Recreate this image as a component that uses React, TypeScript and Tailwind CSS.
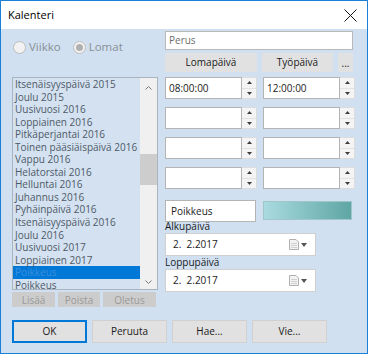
import React from 'react';

const items = [
  'Itsenäisyyspäivä 2015',
  'Joulu 2015',
  'Uusivuosi 2016',
  'Loppiainen 2016',
  'Pitkäperjantai 2016',
  'Toinen pääsiäispäivä 2016',
  'Vappu 2016',
  'Helatorstai 2016',
  'Helluntai 2016',
  'Juhannus 2016',
  'Pyhäinpäivä 2016',
  'Itsenäisyyspäivä 2016',
  'Joulu 2016',
  'Uusivuosi 2017',
  'Loppiainen 2017',
  'Poikkeus',
  'Poikkeus',
];

function Spinner() {
  return (
    <div className="w-[15px] h-[22px] flex flex-col bg-[#f4f4f4] border-y border-r border-[#dcdcdc]">
      <div className="flex-1 flex items-center justify-center border-b border-[#e2e2e2]">
        <svg width="5" height="3" viewBox="0 0 5 3">
          <path d="M0 3 L2.5 0 L5 3 Z" fill="#3c3c3c" />
        </svg>
      </div>
      <div className="flex-1 flex items-center justify-center">
        <svg width="5" height="3" viewBox="0 0 5 3">
          <path d="M0 0 L2.5 3 L5 0 Z" fill="#3c3c3c" />
        </svg>
      </div>
    </div>
  );
}

function TimeBox({ value }: { value?: string }) {
  return (
    <div className="flex">
      <div className="w-[77px] h-[22px] bg-white border border-[#b4b4b4] flex items-center pl-[3px] text-[#1a1a1a]">
        {value}
      </div>
      <Spinner />
    </div>
  );
}

function TimeRow({ a, b, className }: { a?: string; b?: string; className: string }) {
  return (
    <div className={`flex gap-[6px] ${className}`}>
      <TimeBox value={a} />
      <TimeBox value={b} />
    </div>
  );
}

function DateBox() {
  return (
    <div className="w-[151px] h-[23px] bg-white border border-[#cfcfcf] flex items-center pl-[7px] text-[#1a1a1a]">
      <span className="flex-1 whitespace-pre">2.  2.2017</span>
      <svg width="10" height="11" viewBox="0 0 10 11" className="mr-[2px]">
        <path d="M0.5 0.5 H7 L9.5 3 V10.5 H0.5 Z" fill="#f2f2f2" stroke="#b0b0b0" />
        <path d="M2 4.5 H8 M2 6.5 H8 M2 8.5 H8" stroke="#d0d0d0" />
      </svg>
      <svg width="6" height="4" viewBox="0 0 6 4" className="mr-[8px]">
        <path d="M0 0 L3 4 L6 0 Z" fill="#555" />
      </svg>
    </div>
  );
}

function Radio({ label, checked }: { label: string; checked?: boolean }) {
  return (
    <div className="flex items-center gap-[3px] text-[11.5px] text-[#8a8f95]">
      <div className="w-[13px] h-[13px] rounded-full border border-[#bcbcbc] bg-[#f2f2f2] flex items-center justify-center">
        {checked && <div className="w-[7px] h-[7px] rounded-full bg-[#b0b0b0]" />}
      </div>
      <span>{label}</span>
    </div>
  );
}

export default function App() {
  return (
    <div
      className="w-[368px] h-[354px] border border-[#1a7fd6] bg-[#d0e0f1] flex flex-col overflow-hidden text-[10px]"
      style={{ fontFamily: '"Open Sans", "Noto Sans", sans-serif' }}
    >
      {/* Title bar */}
      <div className="h-[28px] bg-white flex items-center justify-between pl-[7px] pr-[10px] shrink-0">
        <span className="text-[11px] text-black">Kalenteri</span>
        <svg width="13" height="13" viewBox="0 0 13 13">
          <path d="M0.5 0.5 L12.5 12.5 M12.5 0.5 L0.5 12.5" stroke="#111" strokeWidth="1" />
        </svg>
      </div>

      <div className="flex">
        {/* Left column */}
        <div className="ml-[11px] w-[146px] flex flex-col">
          <div className="mt-[11px] h-[14px] flex items-center gap-[12px] pl-[1px]">
            <Radio label="Viikko" />
            <Radio label="Lomat" checked />
          </div>
          <div className="mt-[23px] h-[213px] border border-[#a9b4bf] bg-[#d3e1f1] flex overflow-hidden">
            <div className="flex-1 min-w-0 leading-[12.55px] text-[#4f5a66]">
              {items.map((t, i) => (
                <div
                  key={i}
                  className={`pl-[2px] whitespace-nowrap ${i === 15 ? 'bg-[#0078d7] text-[#3d8fdc]' : ''}`}
                >
                  {t}
                </div>
              ))}
            </div>
            <div className="w-[17px] shrink-0 bg-[#f0f0f0] flex flex-col items-center">
              <svg width="7" height="4" viewBox="0 0 7 4" className="mt-[8px]">
                <path d="M0.5 3.5 L3.5 0.5 L6.5 3.5" stroke="#7a7a7a" fill="none" />
              </svg>
              <div className="mt-[64px] w-[17px] h-[31px] bg-[#cdcdcd]" />
              <div className="flex-1" />
              <svg width="7" height="4" viewBox="0 0 7 4" className="mb-[5px]">
                <path d="M0.5 0.5 L3.5 3.5 L6.5 0.5" stroke="#7a7a7a" fill="none" />
              </svg>
            </div>
          </div>
          <div className="mt-[2px] flex gap-[3px] text-[#9a9a9a] leading-none">
            <div className="w-[43px] h-[15px] bg-[#cccccc] flex items-center justify-center">Lisää</div>
            <div className="w-[42px] h-[15px] bg-[#cccccc] flex items-center justify-center">Poista</div>
            <div className="w-[53px] h-[15px] bg-[#cccccc] flex items-center justify-center">Oletus</div>
          </div>
        </div>

        {/* Right column */}
        <div className="ml-[7px] w-[190px] flex flex-col">
          <div className="mt-[2px] w-[188px] h-[19px] bg-white border border-[#b9b9b9] flex items-center pl-[3px] text-[#6d6d6d]">
            Perus
          </div>
          <div className="mt-[3px] flex gap-[5px] text-[#1a1a1a]">
            <div className="w-[92px] h-[19px] bg-[#e1e1e1] flex items-center justify-center">Lomapäivä</div>
            <div className="w-[71px] h-[19px] bg-[#e1e1e1] flex items-center justify-center">Työpäivä</div>
            <div className="w-[15px] h-[19px] bg-[#e1e1e1] flex items-center justify-center leading-none">...</div>
          </div>
          <TimeRow a="08:00:00" b="12:00:00" className="mt-[5px]" />
          <TimeRow className="mt-[8px]" />
          <TimeRow className="mt-[8px]" />
          <TimeRow className="mt-[8px]" />
          <div className="mt-[11px] flex gap-[7px] items-start">
            <div className="w-[91px] h-[22px] bg-white border border-[#b4b4b4] flex items-center pl-[5px] text-[#1a1a1a]">
              Poikkeus
            </div>
            <div className="mt-[1px] w-[89px] h-[19px] border border-[#9fc6c8] bg-gradient-to-r from-[#a9dbe0] to-[#5ea6a4]" />
          </div>
          <div className="h-[11px] leading-[11px] text-[#1a1a1a] mt-[-1px]">Alkupäivä</div>
          <div className="mt-[1px]"><DateBox /></div>
          <div className="h-[13px] leading-[13px] text-[#1a1a1a]">Loppupäivä</div>
          <DateBox />
        </div>
      </div>

      {/* Bottom buttons */}
      <div className="mt-[13px] ml-[11px] flex gap-[5px] text-[#1a1a1a]">
        <div className="w-[75px] h-[23px] bg-[#e1e1e1] border-2 border-[#0078d7] flex items-center justify-center">OK</div>
        <div className="w-[75px] h-[23px] bg-[#e1e1e1] border border-[#d0d0d0] flex items-center justify-center">Peruuta</div>
        <div className="w-[75px] h-[23px] bg-[#e1e1e1] border border-[#d0d0d0] flex items-center justify-center">Hae...</div>
        <div className="w-[75px] h-[23px] bg-[#e1e1e1] border border-[#d0d0d0] flex items-center justify-center">Vie...</div>
      </div>
    </div>
  );
}
